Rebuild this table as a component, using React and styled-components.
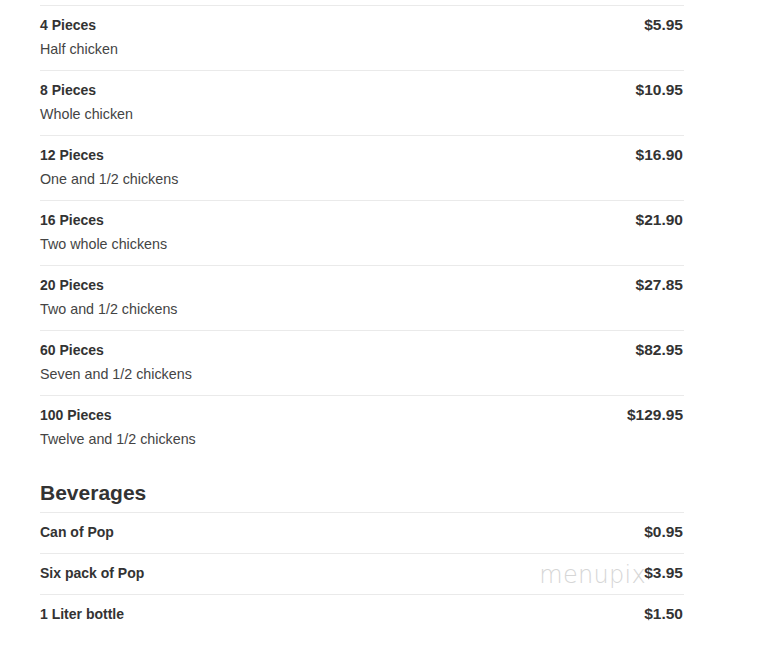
import React from "react";
import styled, { createGlobalStyle } from "styled-components";

const GlobalStyle = createGlobalStyle`
  html, body {
    margin: 0;
    padding: 0;
    background: #fff;
  }
  body {
    font-family: "Liberation Sans", Arial, sans-serif;
    color: #333;
  }
`;

const Menu = styled.div`
  width: 644px;
  margin-left: 40px;
  padding-top: 5px;
`;

const Row = styled.div`
  position: relative;
  display: flex;
  justify-content: space-between;
  align-items: flex-start;
  border-top: 1px solid #eaeaea;
  padding: ${p => (p.compact ? "9px 1px 11px 0" : "9px 1px 7px 0")};
`;

const Info = styled.div`
  display: flex;
  flex-direction: column;
`;

const Name = styled.div`
  font-size: 14px;
  font-weight: bold;
  line-height: 20px;
  color: #333;
`;

const Desc = styled.div`
  font-size: 14.3px;
  line-height: 28px;
  color: #444;
`;

const Price = styled.div`
  font-size: 15.5px;
  font-weight: bold;
  line-height: 20px;
  color: #333;
`;

const Heading = styled.h2`
  margin: 21px 0 8px;
  font-size: 21px;
  line-height: 23px;
  font-weight: bold;
  color: #333;
`;

const Watermark = styled.span`
  position: absolute;
  right: 38px;
  top: 7px;
  font-family: "DejaVu Sans", sans-serif;
  font-weight: 200;
  font-size: 24px;
  letter-spacing: 0.3px;
  color: #d6d6d6;
`;

const pieces = [
  ["4 Pieces", "Half chicken", "$5.95"],
  ["8 Pieces", "Whole chicken", "$10.95"],
  ["12 Pieces", "One and 1/2 chickens", "$16.90"],
  ["16 Pieces", "Two whole chickens", "$21.90"],
  ["20 Pieces", "Two and 1/2 chickens", "$27.85"],
  ["60 Pieces", "Seven and 1/2 chickens", "$82.95"],
  ["100 Pieces", "Twelve and 1/2 chickens", "$129.95"],
];

const beverages = [
  ["Can of Pop", "$0.95"],
  ["Six pack of Pop", "$3.95"],
  ["1 Liter bottle", "$1.50"],
];

export default function App() {
  return (
    <>
      <GlobalStyle />
      <Menu>
        {pieces.map(([name, desc, price]) => (
          <Row key={name}>
            <Info>
              <Name>{name}</Name>
              <Desc>{desc}</Desc>
            </Info>
            <Price>{price}</Price>
          </Row>
        ))}
        <Heading>Beverages</Heading>
        {beverages.map(([name, price], i) => (
          <Row compact key={name}>
            <Name>{name}</Name>
            <Price>{price}</Price>
            {i === 1 && <Watermark>menupix</Watermark>}
          </Row>
        ))}
      </Menu>
    </>
  );
}
